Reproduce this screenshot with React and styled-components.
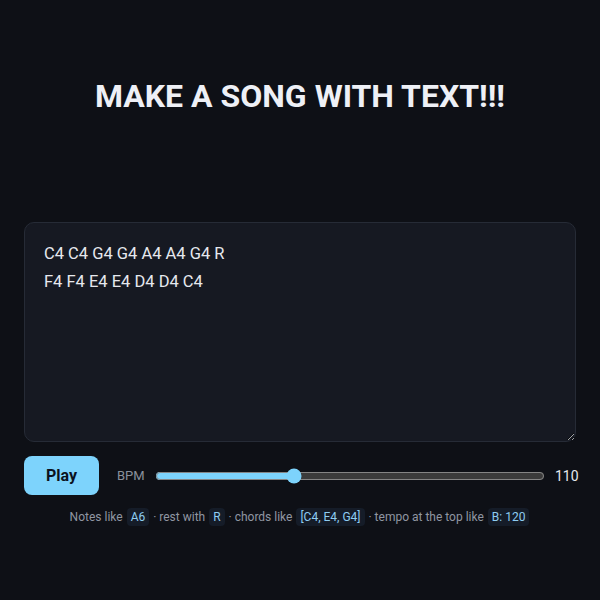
import React, { useState } from 'react';
import styled, { createGlobalStyle } from 'styled-components';

const GlobalStyle = createGlobalStyle`
  html, body {
    margin: 0;
    padding: 0;
    background: #0e1016;
    color-scheme: dark;
  }
  body {
    font-family: Roboto, "Liberation Sans", sans-serif;
  }
`;

const Page = styled.div`
  width: 600px;
  height: 600px;
  box-sizing: border-box;
  padding: 0 24px;
  display: flex;
  flex-direction: column;
`;

const Title = styled.h1`
  margin: 76px 0 0;
  text-align: center;
  font-size: 32px;
  font-weight: 700;
  line-height: 40px;
  color: #eef0f6;
`;

const Editor = styled.textarea`
  margin-top: 106px;
  height: 220px;
  box-sizing: border-box;
  padding: 17px 19px;
  border: 1px solid #262b36;
  border-radius: 10px;
  background: #161922;
  color: #e6e8ee;
  font-family: Roboto, "Liberation Sans", sans-serif;
  font-size: 16.5px;
  line-height: 28px;
  outline: none;
  resize: vertical;
`;

const Controls = styled.div`
  margin-top: 14px;
  display: flex;
  align-items: center;
  gap: 18px;
`;

const PlayButton = styled.button`
  width: 75px;
  height: 39px;
  border: none;
  border-radius: 8px;
  background: #7dd3fc;
  color: #0b1220;
  font-family: Roboto, "Liberation Sans", sans-serif;
  font-size: 16px;
  font-weight: 700;
  cursor: pointer;
`;

const Label = styled.span`
  font-size: 13px;
  color: #8a909c;
`;

const Slider = styled.input`
  flex: 1;
  margin: 0 -8px 0 -8px;
  accent-color: #7dd3fc;
`;

const Value = styled.span`
  font-size: 14px;
  color: #e6e8ee;
  width: 21px;
  text-align: right;
`;

const Hint = styled.p`
  margin: 12px 0 0;
  text-align: center;
  font-size: 12px;
  color: #9096a2;
  line-height: 20px;
`;

const Code = styled.code`
  display: inline-block;
  padding: 0 4px;
  margin: 0 1px;
  border-radius: 4px;
  background: #151c28;
  color: #8fcdf2;
  font-family: Roboto, "Liberation Sans", sans-serif;
  font-size: 12px;
  line-height: 18px;
`;

export default function App() {
  const [text, setText] = useState('C4 C4 G4 G4 A4 A4 G4 R\nF4 F4 E4 E4 D4 D4 C4');
  const [bpm, setBpm] = useState(110);

  return (
    <>
      <GlobalStyle />
      <Page>
        <Title>MAKE A SONG WITH TEXT!!!</Title>
        <Editor value={text} onChange={(e) => setText(e.target.value)} spellCheck={false} />
        <Controls>
          <PlayButton>Play</PlayButton>
          <Label>BPM</Label>
          <Slider
            type="range"
            min={40}
            max={240}
            value={bpm}
            onChange={(e) => setBpm(Number(e.target.value))}
          />
          <Value>{bpm}</Value>
        </Controls>
        <Hint>
          Notes like <Code>A6</Code> · rest with <Code>R</Code> · chords like{' '}
          <Code>[C4, E4, G4]</Code> · tempo at the top like <Code>B: 120</Code>
        </Hint>
      </Page>
    </>
  );
}
